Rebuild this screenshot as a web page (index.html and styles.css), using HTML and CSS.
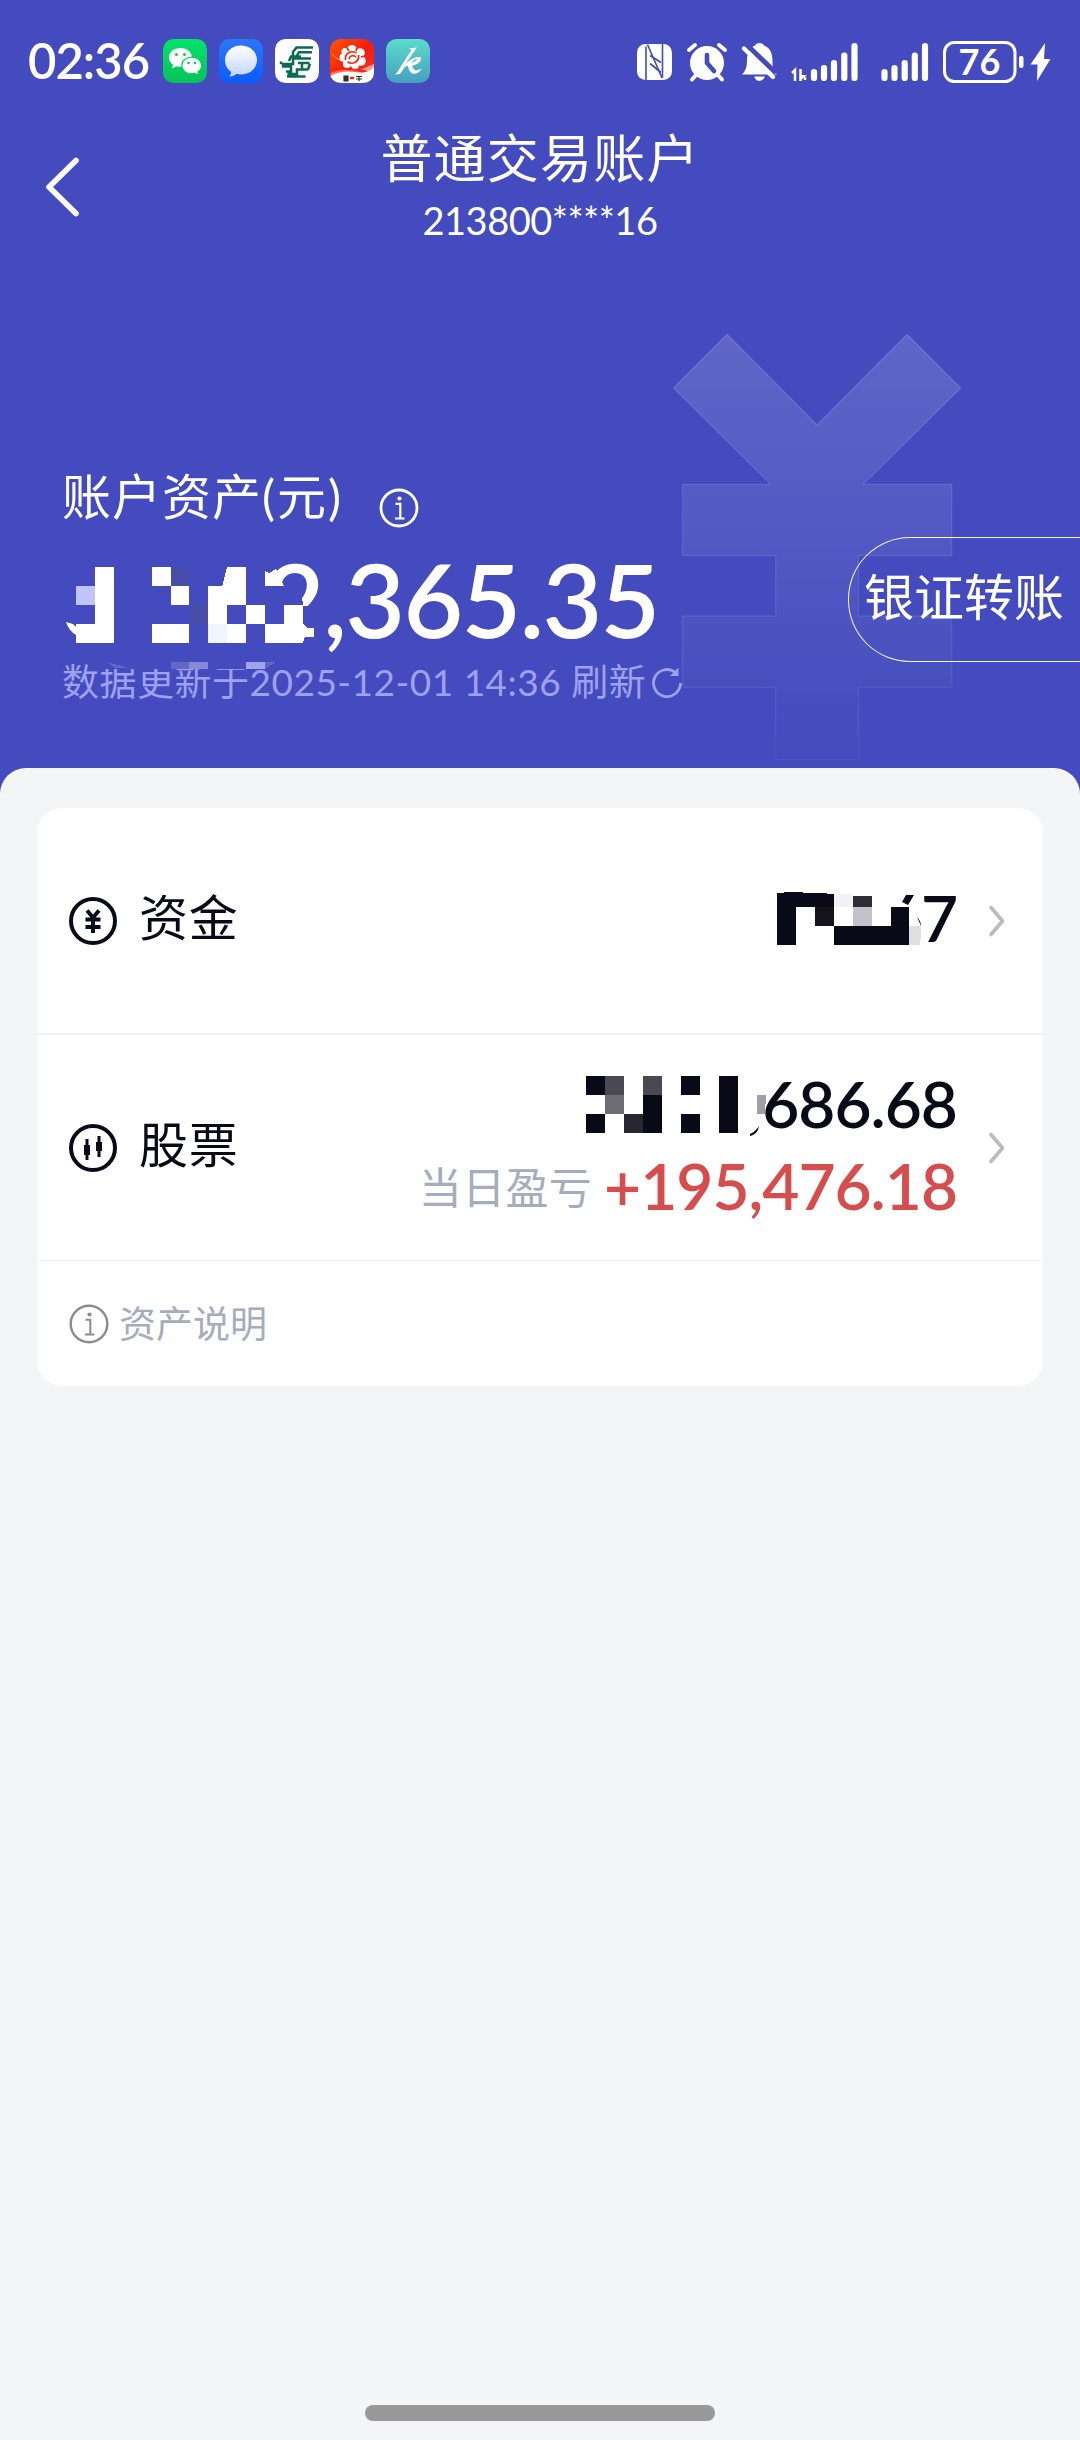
FILE: index.html
```html
<!DOCTYPE html>
<html lang="zh-CN">
<head>
<meta charset="utf-8">
<title>普通交易账户</title>
<link rel="stylesheet" href="styles.css">
</head>
<body>
<div class="screen">
  <header class="hero">
    <svg class="watermark" width="290" height="430" viewBox="672 332 290 430">
      <defs><linearGradient id="wm" x1="0" y1="0" x2="0" y2="1"><stop offset="0" stop-color="#fff" stop-opacity=".15"/><stop offset="1" stop-color="#fff" stop-opacity="0"/></linearGradient>
      <linearGradient id="wl" x1="0" y1="0" x2="0" y2="1"><stop offset="0" stop-color="#fff" stop-opacity=".15"/><stop offset="1" stop-color="#fff" stop-opacity=".06"/></linearGradient></defs>
      <path fill="url(#wm)" stroke="url(#wl)" stroke-width="1.3" d="M727 334.3 817 425 907 334.3 960.7 388 863.3 484.3H951.7V555.5H858.5V616H951.7V687.3H858.5V759.7H775.7V687.3H682.5V616H775.7V555.5H682.5V484.3H770.7L673.7 388Z"/>
    </svg>

    <div class="status">
      <span class="clock">02:36</span>
      <div class="apps">
        <svg width="44" height="44" viewBox="0 0 44 44"><defs><linearGradient id="g1" x1="0" y1="0" x2="0" y2="1"><stop offset="0" stop-color="#04e36c"/><stop offset="1" stop-color="#06c25a"/></linearGradient></defs><rect width="44" height="44" rx="10.5" fill="url(#g1)"/><path fill="#fff" d="M17.5 9C10.800 9 6 13.200 6 18.500c0 3 1.500 5.500 4 7.200L9 29.500l4.500-2.200c1.300.4 2.600.5 4 .5 6.500 0 11.500-4.200 11.500-9.300S24 9 17.500 9Z"/><path fill="#fff" stroke="#06cd60" stroke-width="1.200" d="M28.700 18.200c-5.600 0-10 3.600-10 8.300s4.400 8.300 10 8.300c1.100 0 2.200-.1 3.200-.5l3.800 2-.9-3.200c2.400-1.600 3.900-3.900 3.900-6.600 0-4.700-4.500-8.300-10-8.300Z"/><g fill="#06cd60"><circle cx="13.500" cy="15.500" r="1.500"/><circle cx="21.500" cy="15.500" r="1.500"/><circle cx="25.500" cy="24" r="1.300"/><circle cx="32" cy="24" r="1.300"/></g></svg>
        <svg width="44" height="44" viewBox="0 0 44 44"><defs><linearGradient id="g2" x1="0" y1="0" x2="0" y2="1"><stop offset="0" stop-color="#2c78f6"/><stop offset="1" stop-color="#0a5bff"/></linearGradient><linearGradient id="g2b" x1="0" y1="0" x2="0" y2="1"><stop offset="0" stop-color="#fff"/><stop offset="1" stop-color="#c3d5ff"/></linearGradient></defs><rect width="44" height="44" rx="10.500" fill="url(#g2)"/><path fill="url(#g2b)" d="M22 6.500c-9 0-16 6.300-16 14.500 0 5 2.300 9 6 11.700.2 2-.5 3.500-1.700 4.800 3 .2 5.500-1 7.500-2.700 1.300.4 2.700.6 4.200.6 9 0 16-6.300 16-14.400S31 6.500 22 6.500Z"/></svg>
        <svg width="44" height="44" viewBox="0 0 44 44"><rect width="44" height="44" rx="10.500" fill="#fff"/><g fill="none" stroke="#0b6a50" stroke-width="2.500"><path d="M38 8.500H21.500L18 13v5.500M37 13.200H24l-2 3.500M36 19.500H18v5.500H6.500M34.500 24H23M6 22.500V25M14 22l2-4.500h10M33 30.500H22V35H12.500M33 30.500l2-6M30.500 37.500H12M27 31v-6M7 27.500h9v5H11"/></g></svg>
        <svg width="44" height="44" viewBox="0 0 44 44"><defs><clipPath id="c4"><rect width="44" height="44" rx="10.500"/></clipPath><linearGradient id="g4" x1="0" y1="0" x2="1" y2="1"><stop offset="0" stop-color="#ff5a00"/><stop offset=".5" stop-color="#f51d0a"/><stop offset="1" stop-color="#f0352c"/></linearGradient></defs><g clip-path="url(#c4)"><path fill="url(#g4)" d="M0 0h44v44H0z"/><path d="M0 14C12 23 25 29 44 34v-9l-12 5C20 28 8 22 0 14Z" fill="#ffc3b4" opacity=".75"/><path d="M0 34c10-4 20-4 30-1l-30 6Z" fill="#ff6a58"/><path fill="#fff" d="M0 37c10-5 18-5 25-4s13 1 19-5v16H0Z"/><g fill="#fff"><circle cx="22" cy="11" r="5"/><circle cx="30" cy="14" r="4.800"/><circle cx="31" cy="22" r="4.800"/><circle cx="25" cy="26" r="4"/><circle cx="17" cy="25" r="4"/><circle cx="13.500" cy="18.500" r="4"/><circle cx="15" cy="12.500" r="3.500"/><circle cx="22" cy="18" r="8"/></g><path d="M15.500 21c-1-7 6-10 11-7M28.500 16c1 7-6 10-11 7M19 20c1-4 5-4 7-2M17 9l2 3M27 9l-1 3M31 18l4-1" fill="none" stroke="#f3260f" stroke-width="1.700"/><path d="M14 37h4v5h-4zM26 37.500h6M29 37v5M26 40h6" fill="#332" stroke="#332" stroke-width="1.200"/><path d="M20 39h4" stroke="#e52d1c" stroke-width="2.500"/></g></svg>
        <svg width="44" height="44" viewBox="0 0 44 44"><defs><linearGradient id="g5" x1="0" y1="0" x2="0" y2="1"><stop offset="0" stop-color="#5bdccb"/><stop offset="1" stop-color="#469fbe"/></linearGradient></defs><rect width="44" height="44" rx="10.500" fill="url(#g5)"/><path fill="#fff" d="M23 9.500 31 8.500 18.500 26C24 20 31 17 35 18.500c1 4-4 7-9 8.500 2 4 2 6 10 2.500-5 7-12 8-14-2.500l-3 .5L14 35l-5 .5 2-2L25.500 11ZM25 24c3-1 5-2 6-4-2 0-4 2-6 4Z"/></svg>
      </div>
      <svg class="signals" width="432" height="44" viewBox="636 38 432 44" fill="#fff">
        <rect x="637" y="43" width="35" height="36" rx="8.500"/><path d="M646 45.500V79M647.500 43.500 662 77M662.500 43v33.500" stroke="#434bbe" stroke-width="1.600" fill="none"/><path d="M650 54.500l11 7M650 62.500l11 9" stroke="#434bbe" stroke-width="1.700"/>
        <circle cx="707" cy="62" r="17"/><path d="M689 49l6-5M725 49l-6-5M696 74l-4 4.500M718 74l4 4.500" stroke="#fff" stroke-width="4" stroke-linecap="round"/><path d="M707 54v8l7 8" stroke="#434bbe" stroke-width="4.600" fill="none" stroke-linecap="round"/>
        <path d="M742 73.500c4-4 5-8 5-14.500 0-8 5-14 8-14.500 1-3.500 8-3.500 9 0 6 2 8.500 8 8.500 15.500 0 7 1 10 4.500 13.500ZM754 75.500h11q-2 4.500-5.500 4.500t-5.500-4.500Z"/><path d="M746 43l30 29" stroke="#434bbe" stroke-width="5"/><path d="M744 47.500l29 28.500" stroke="#fff" stroke-width="4.200" stroke-linecap="round"/>
        <path d="M792 72l3-3v11M800.500 68v12M805 79v-3" fill="none" stroke="#fff" stroke-width="2.500"/><path d="M801 79v-5h6Z"/>
        <path d="M814 71v6M824 67v10M834 62v15M844.300 54.500v22.500M854.500 45v32M884.500 71v6M894.500 67v10M904.700 62v15M914.800 54.500v22.500M925 45v32" stroke="#fff" stroke-width="6.200" stroke-linecap="round"/>
        <rect x="944.500" y="41.500" width="70.500" height="39" rx="10" fill="none" stroke="#fff" stroke-width="3"/><rect x="1019" y="55" width="4.500" height="12" rx="2"/>
        <text x="979.500" y="73.500" class="battery" text-anchor="middle">76</text>
        <path d="M1045 42l-14.500 21.500h7L1037 80l13.500-22h-6.500Z"/>
      </svg>
    </div>

    <div class="nav">
      <svg class="back" width="36" height="62" viewBox="0 0 36 62"><path d="M32 4.500 5 31 32 57.500" fill="none" stroke="#fff" stroke-width="5.600" stroke-linecap="round" stroke-linejoin="round"/></svg>
      <div class="titles"><h1>普通交易账户</h1><p>213800****16</p></div>
    </div>

    <div class="asset">
      <div class="asset-label"><span>账户资产<i>(元)</i></span>
        <svg class="info" width="40" height="40" viewBox="0 0 40 40"><circle cx="20" cy="20" r="18" fill="none" stroke="#fff" stroke-width="2.800"/><circle cx="20.500" cy="10.500" r="2.100" fill="#fff"/><path d="M16.500 15.800h4.800v14.500M16 30.500h9.500" stroke="#fff" stroke-width="2.200" fill="none"/></svg>
      </div>
      <div class="amount">2,365.35</div>
      <div class="updated"><span>数据更新于2025-12-01 14:36 刷新</span>
        <svg width="32" height="32" viewBox="0 0 32 32"><path d="M24 6.200A13.500 13.500 0 1 0 29.500 17" fill="none" stroke="#9ea1ee" stroke-width="2.800"/><path d="M27.500 1.500V10H19Z" fill="#9ea1ee"/></svg>
      </div>
      <svg class="mosaic" width="260" height="112" viewBox="64 560 260 112" shape-rendering="crispEdges">
        <path fill="#434bbe" d="M262 560h10v11l12 14h17l2 21h21v20h-3v18h-59ZM105 660h170v9H105Z"/>
        <g fill="#fff"><path d="M95 567h19v76H76v-19h19ZM152 567h19v19h-19ZM171 586h18v19h-18ZM152 624h37v19h-37ZM227 567h19v38h19v19h-19v19h-38ZM208 586h19v57h-19ZM265 571l4 2 7-4 8 17h-19ZM284 605h19v19l5 4h6v9h-9l-2 6h-38v-19h19Z"/><path shape-rendering="auto" d="M66 622l7 2 3 3v8q-7-4-10-13Z"/></g>
        <path fill="#434bbe" d="M227 605h19v19h-19Z"/><path fill="#434bbe" d="M246 624h19v19h-19Z"/>
        <path fill="#c1c4fb" d="M76 586h19v19H76Z"/><path fill="#f0f5ff" d="M208 624h19v19h-19Z"/><path fill="#484daa" d="M171 567h17v19h-17ZM189 605h19v19h-19Z"/>
        <path fill="#6468c5" d="M171 662h18v7h-18Z"/><path fill="#8589d9" d="M189 662h19v7h-19Z"/><path fill="#a2a6e9" d="M246 662h19v7h-19Z"/><path fill="#6367c7" d="M265 662h11l-11 7ZM107 662l22 6h-14Z"/>
      </svg>
    </div>
    <a class="transfer">银证转账</a>
  </header>

  <main class="sheet">
    <section class="card">
      <div class="row">
        <svg class="row-icon" width="48" height="48" viewBox="0 0 48 48"><circle cx="24" cy="24" r="22" fill="none" stroke="#080a17" stroke-width="4"/><path d="M18 13.500l6 7 6-7M24 20v16M16.500 22.500h15M16.500 30h15" fill="none" stroke="#080a17" stroke-width="4"/></svg>
        <span class="name">资金</span>
        <div class="values"><div class="num">7
          <svg class="mask-cash" width="148" height="56" viewBox="776 891 148 56" shape-rendering="crispEdges"><g fill="#080a17"><path d="M777 894h7v-1h19v1h24v1h7v13h-38v38h-19ZM834 927h57v-19h18v38h-75Z"/></g><path fill="#14131b" d="M815 908h19v19h-19Z"/><path fill="#f2f1f6" d="M834 895h19v13h-19Z"/><path fill="#2c2d36" d="M853 897h19v11h-19Z"/><path fill="#c3c2cb" d="M853 908h19v19h-19Z"/><path fill="#e0dfe4" d="M909 927h12v10l-1 9h-11Z"/><path fill="#080a17" shape-rendering="auto" d="M906 896h8l-6 10-6-3ZM917 918q4 4 4 9-2-5-4-9Z"/></svg>
        </div></div>
        <svg class="chevron" width="18" height="34" viewBox="0 0 18 34"><path d="M3 3.500 14.500 17 3 30.500" fill="none" stroke="#b9bac2" stroke-width="3.600" stroke-linecap="round" stroke-linejoin="round"/></svg>
      </div>
      <div class="row second">
        <svg class="row-icon" width="48" height="48" viewBox="0 0 48 48"><circle cx="24" cy="24" r="22" fill="none" stroke="#080a17" stroke-width="4"/><path d="M15 21h6v10h-6ZM27 18h6v9h-6ZM16.500 15h3v21h-3ZM28.500 12h3v21h-3Z" fill="#080a17"/></svg>
        <span class="name">股票</span>
        <div class="values">
          <div class="num">686.68
            <svg class="mask-stock" width="184" height="62" viewBox="586 1077 184 62" shape-rendering="crispEdges"><path fill="#080a17" d="M587 1078h19v19h-19ZM587 1116h19v19h-19ZM644 1097h19v38h-19ZM682 1078h19v19h-19ZM682 1116h19v19h-19ZM720 1078h19v57h-19Z"/><path fill="#4a4952" d="M606 1078h19v19h-19ZM644 1078h19v19h-19Z"/><path fill="#6e6d76" d="M606 1097h19v19h-19Z"/><path fill="#27272f" d="M625 1116h19v19h-19Z"/><path fill="#a09fa9" d="M758 1097h9l-1 19h-8Z"/><path fill="#080a17" shape-rendering="auto" d="M760 1128q-1 8-9 10v-2q6-3 9-8Z"/></svg>
          </div>
          <div class="gain"><span>当日盈亏</span><b>+195,476.18</b></div>
        </div>
        <svg class="chevron" width="18" height="34" viewBox="0 0 18 34"><path d="M3 3.500 14.500 17 3 30.500" fill="none" stroke="#b9bac2" stroke-width="3.600" stroke-linecap="round" stroke-linejoin="round"/></svg>
      </div>
      <div class="note">
        <svg width="40" height="40" viewBox="0 0 40 40"><circle cx="20" cy="20" r="18.300" fill="none" stroke="#8c8c8c" stroke-width="2.400"/><circle cx="20.500" cy="10.500" r="2.100" fill="#8c8c8c"/><path d="M16.500 15.800h4.800v14.500M16 30.500h9.500" stroke="#8c8c8c" stroke-width="2" fill="none"/></svg>
        <span>资产说明</span>
      </div>
    </section>
    <div class="home"></div>
  </main>
</div>
</body>
</html>
```

FILE: styles.css
```css
* { box-sizing: border-box; }
body { margin: 0; background: #434bbe; color: #fff; font-family: Lato, "Noto Sans CJK SC", sans-serif; }
h1, p { margin: 0; font-weight: 400; }
.screen { width: 1080px; height: 2440px; display: flex; flex-direction: column; overflow: hidden; }
.hero { height: 768px; position: relative; flex: none; }
.watermark { position: absolute; left: 672px; top: 332px; }

.status { height: 122px; padding: 0 12px 0 28px; display: flex; align-items: center; }
.clock { width: 135px; font-size: 49px; font-weight: 600; line-height: 60px; letter-spacing: -1px; white-space: nowrap; padding-bottom: 3px; }
.apps { display: flex; gap: 11.8px; }
.apps svg, .signals { display: block; flex: none; }
.signals { margin-left: auto; }
.battery { font: 700 36px Lato, sans-serif; }

.nav { height: 130px; position: relative; display: flex; align-items: flex-start; justify-content: center; }
.back { position: absolute; left: 44px; top: 34px; }
.titles { text-align: center; padding-top: 2px; }
.titles h1 { font-size: 52px; line-height: 68px; letter-spacing: 1.2px; }
.titles p { font-size: 38px; line-height: 48px; margin-top: 4px; letter-spacing: -.5px; }

.asset { position: absolute; left: 62px; top: 460px; width: 660px; display: flex; flex-direction: column; }
.asset-label { height: 78px; display: flex; align-items: flex-start; font-size: 49px; line-height: 72px; letter-spacing: 1px; }
.asset-label i { font-style: normal; letter-spacing: 2px; }
.info { margin: 28px 0 0 36px; }
.amount { height: 124px; font-size: 103px; font-weight: 600; line-height: 120px; padding-left: 203px; letter-spacing: -1.6px; white-space: nowrap; }
.updated { display: flex; align-items: center; gap: 5px; height: 40px; font-size: 37px; line-height: 40px; letter-spacing: .5px; color: #9ea1ee; white-space: nowrap; }
.mosaic { position: absolute; left: 2px; top: 100px; }
.transfer { position: absolute; right: 0; top: 537px; width: 232px; height: 125px; border: 1px solid #f8f7cf; border-right: 0; border-radius: 62px 0 0 62px; padding-left: 15px; font-size: 50px; line-height: 119px; white-space: nowrap; }

.sheet { flex: 1; position: relative; background: #f3f5f7; border-radius: 26px 26px 0 0; padding: 40px 37px 0; }
.card { height: 578px; background: #fff; border-radius: 25px; color: #080a17; }
.row { height: 227px; display: flex; align-items: center; padding: 0 37px 0 32px; border-bottom: 2px solid #eff0f1; }
.row.second { height: 226px; border-bottom-width: 1px; }
.name { font-size: 49px; line-height: 64px; margin-left: 22px; letter-spacing: .8px; padding-bottom: 7px; }
.values { margin-left: auto; display: flex; flex-direction: column; align-items: flex-end; padding-bottom: 5px; }
.chevron { margin-left: 31px; }
.num { position: relative; font-size: 64px; font-weight: 600; line-height: 80px; letter-spacing: -1px; }
.mask-cash { position: absolute; right: 33px; top: 12px; }
.mask-stock { position: absolute; right: 188px; top: 11px; }
.gain { display: flex; align-items: center; height: 82px; }
.gain span { font-size: 43px; letter-spacing: .3px; color: #a5adbd; }
.gain b { font-size: 64px; font-weight: 600; color: #d64d4d; margin-left: 12px; letter-spacing: -1px; }
.note { height: 125px; display: flex; align-items: center; gap: 10px; padding-left: 32px; font-size: 37px; color: #a5adbd; }
.note span { padding-bottom: 4px; }
.home { position: absolute; left: 365px; bottom: 19px; width: 350px; height: 16px; border-radius: 8px; background: #999; }
```
